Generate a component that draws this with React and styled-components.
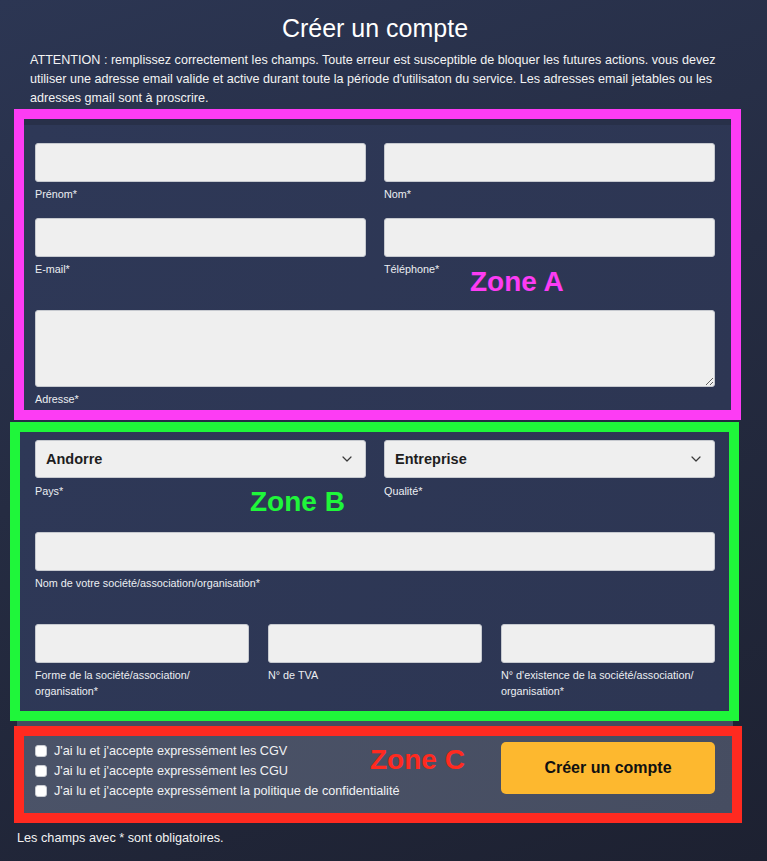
import React from "react";
import styled, { createGlobalStyle } from "styled-components";

const GlobalStyle = createGlobalStyle`
  html, body { margin: 0; padding: 0; }
  body {
    font-family: "Liberation Sans", Arial, Helvetica, sans-serif;
    background: linear-gradient(160deg, #2c3653 0%, #252c42 45%, #1d2131 100%);
    min-height: 861px;
    color: #fff;
  }
  * { box-sizing: border-box; }
`;

const Page = styled.div`
  width: 767px;
  min-height: 861px;
  padding: 13px 34px 0 17px;
`;

const Title = styled.h1`
  margin: 0;
  font-size: 25px;
  line-height: 30px;
  font-weight: 400;
  text-align: center;
  color: #fff;
`;

const Intro = styled.p`
  margin: 7.5px 0 0 13px;
  font-size: 12.6px;
  line-height: 19px;
  color: #f3f3f3;
`;

const Zone = styled.section`
  position: relative;
  border: 10px solid ${(p) => p.$color};
  margin-left: ${(p) => p.$ml}px;
  margin-top: ${(p) => p.$mt}px;
  width: ${(p) => p.$w}px;
`;

const Panel = styled.div`
  background: ${(p) =>
    p.$light
      ? "linear-gradient(120deg, #4b5368 0%, #464d61 100%)"
      : "linear-gradient(120deg, #2e3857 0%, #2d3653 100%)"};
  padding: ${(p) => p.$pad};
  box-shadow: ${(p) => (p.$shade ? "inset 0 6px 0 #283049" : "none")};
`;

const ZoneTag = styled.span`
  position: absolute;
  left: ${(p) => p.$x}px;
  top: ${(p) => p.$y}px;
  font-size: 28px;
  line-height: 28px;
  font-weight: 700;
  color: ${(p) => p.$color};
  pointer-events: none;
`;

const Grid = styled.div`
  display: grid;
  grid-template-columns: repeat(${(p) => p.$cols}, 1fr);
  column-gap: ${(p) => p.$gap}px;
  margin-top: ${(p) => p.$mt || 0}px;
  margin-bottom: ${(p) => p.$mb || 0}px;
`;

const Field = styled.div`
  display: flex;
  flex-direction: column;
`;

const TextInput = styled.input`
  display: block;
  width: 100%;
  height: 39px;
  margin: 0;
  border: 1px solid #c6c9cf;
  border-radius: 3px;
  background: #efefef;
  font: inherit;
  padding: 0 10px;
`;

const TextArea = styled.textarea`
  display: block;
  width: 100%;
  height: 77px;
  margin: 0;
  border: 1px solid #c6c9cf;
  border-radius: 3px;
  background: #efefef;
  font: inherit;
  padding: 6px 10px;
  resize: vertical;
`;

const SelectBox = styled.div`
  display: flex;
  align-items: center;
  justify-content: space-between;
  height: 38px;
  border: 1px solid #c6c9cf;
  border-radius: 3px;
  background: #efefef;
  padding: 0 13px 0 10px;
  font-size: 14.5px;
  font-weight: 700;
  color: #1e1e1e;
`;

const Label = styled.label`
  display: block;
  margin-top: ${(p) => p.$mt ?? 5}px;
  font-size: 10.8px;
  line-height: ${(p) => p.$lh || 14}px;
  color: #eceef2;
`;

const Strip = styled.div`
  height: 5px;
  width: 716px;
  background: #454c60;
`;

const TermsRow = styled.div`
  display: flex;
  justify-content: space-between;
  align-items: flex-start;
  height: 77px;
`;

const Checks = styled.div`
  display: flex;
  flex-direction: column;
  padding-top: 5px;
`;

const CheckLine = styled.label`
  display: flex;
  align-items: center;
  gap: 7px;
  height: 20px;
  font-size: 12.7px;
  color: #f1f2f4;
`;

const Box = styled.input`
  appearance: none;
  -webkit-appearance: none;
  width: 12px;
  height: 12px;
  margin: 0;
  border: 1px solid #c9ccd2;
  border-radius: 3px;
  background: #fff;
`;

const SubmitButton = styled.button`
  margin-top: 6px;
  width: 214px;
  height: 52px;
  border: none;
  border-radius: 5px;
  background: #fdb82f;
  color: #111;
  font-family: inherit;
  font-size: 16px;
  font-weight: 700;
`;

const Footer = styled.p`
  margin: 7px 0 0 0;
  font-size: 12.7px;
  line-height: 16px;
  color: #f3f3f3;
`;

const Chevron = () => (
  <svg width="10" height="6" viewBox="0 0 10 6" aria-hidden="true">
    <polyline points="1,1 5,5 9,1" fill="none" stroke="#3a3a3a" strokeWidth="1.2" strokeLinecap="round" strokeLinejoin="round" />
  </svg>
);

export default function App() {
  return (
    <>
      <GlobalStyle />
      <Page>
        <Title>Créer un compte</Title>
        <Intro>
          ATTENTION : remplissez correctement les champs. Toute erreur est susceptible de bloquer les futures actions. vous devez utiliser une adresse email valide et active durant toute la période d'utilisaton du service. Les adresses email jetables ou les adresses gmail sont à proscrire.
        </Intro>

        <Zone $color="#fd3cf4" $ml={-3} $mt={1.5} $w={727}>
          <Panel $pad="24px 16px 4px 11px" $shade>
            <Grid $cols={2} $gap={18} $mb={17}>
              <Field>
                <TextInput />
                <Label>Prénom*</Label>
              </Field>
              <Field>
                <TextInput />
                <Label>Nom*</Label>
              </Field>
            </Grid>
            <Grid $cols={2} $gap={18} $mb={34}>
              <Field>
                <TextInput />
                <Label>E-mail*</Label>
              </Field>
              <Field>
                <TextInput />
                <Label>Téléphone*</Label>
              </Field>
            </Grid>
            <Field>
              <TextArea />
              <Label>Adresse*</Label>
            </Field>
          </Panel>
          <ZoneTag $color="#fd3cf4" $x={446} $y={149}>Zone A</ZoneTag>
        </Zone>

        <Zone $color="#1ff63a" $ml={-7} $mt={2} $w={729}>
          <Panel $pad="8px 14px 12px 15px">
            <Grid $cols={2} $gap={18} $mb={34}>
              <Field>
                <SelectBox>
                  <span>Andorre</span>
                  <Chevron />
                </SelectBox>
                <Label $mt={6}>Pays*</Label>
              </Field>
              <Field>
                <SelectBox>
                  <span>Entreprise</span>
                  <Chevron />
                </SelectBox>
                <Label $mt={6}>Qualité*</Label>
              </Field>
            </Grid>
            <Field>
              <TextInput />
              <Label>Nom de votre société/association/organisation*</Label>
            </Field>
            <Grid $cols={3} $gap={19} $mt={34}>
              <Field>
                <TextInput />
                <Label $mt={4} $lh={16}>
                  Forme de la société/association/
                  <br />
                  organisation*
                </Label>
              </Field>
              <Field>
                <TextInput />
                <Label $mt={4} $lh={16}>N° de TVA</Label>
              </Field>
              <Field>
                <TextInput />
                <Label $mt={4} $lh={16}>
                  N° d'existence de la société/association/
                  <br />
                  organisation*
                </Label>
              </Field>
            </Grid>
          </Panel>
          <ZoneTag $color="#1ff63a" $x={230} $y={56}>Zone B</ZoneTag>
        </Zone>

        <Strip />
        <Zone $color="#ff2a20" $ml={-3} $mt={0} $w={728}>
          <Panel $pad="0 17px 0 11px" $light>
            <TermsRow>
              <Checks>
                <CheckLine>
                  <Box type="checkbox" />
                  J'ai lu et j'accepte expressément les CGV
                </CheckLine>
                <CheckLine>
                  <Box type="checkbox" />
                  J'ai lu et j'accepte expressément les CGU
                </CheckLine>
                <CheckLine>
                  <Box type="checkbox" />
                  J'ai lu et j'accepte expressément la politique de confidentialité
                </CheckLine>
              </Checks>
              <SubmitButton type="button">Créer un compte</SubmitButton>
            </TermsRow>
          </Panel>
          <ZoneTag $color="#ff2a20" $x={346} $y={10}>Zone C</ZoneTag>
        </Zone>

        <Footer>Les champs avec * sont obligatoires.</Footer>
      </Page>
    </>
  );
}
